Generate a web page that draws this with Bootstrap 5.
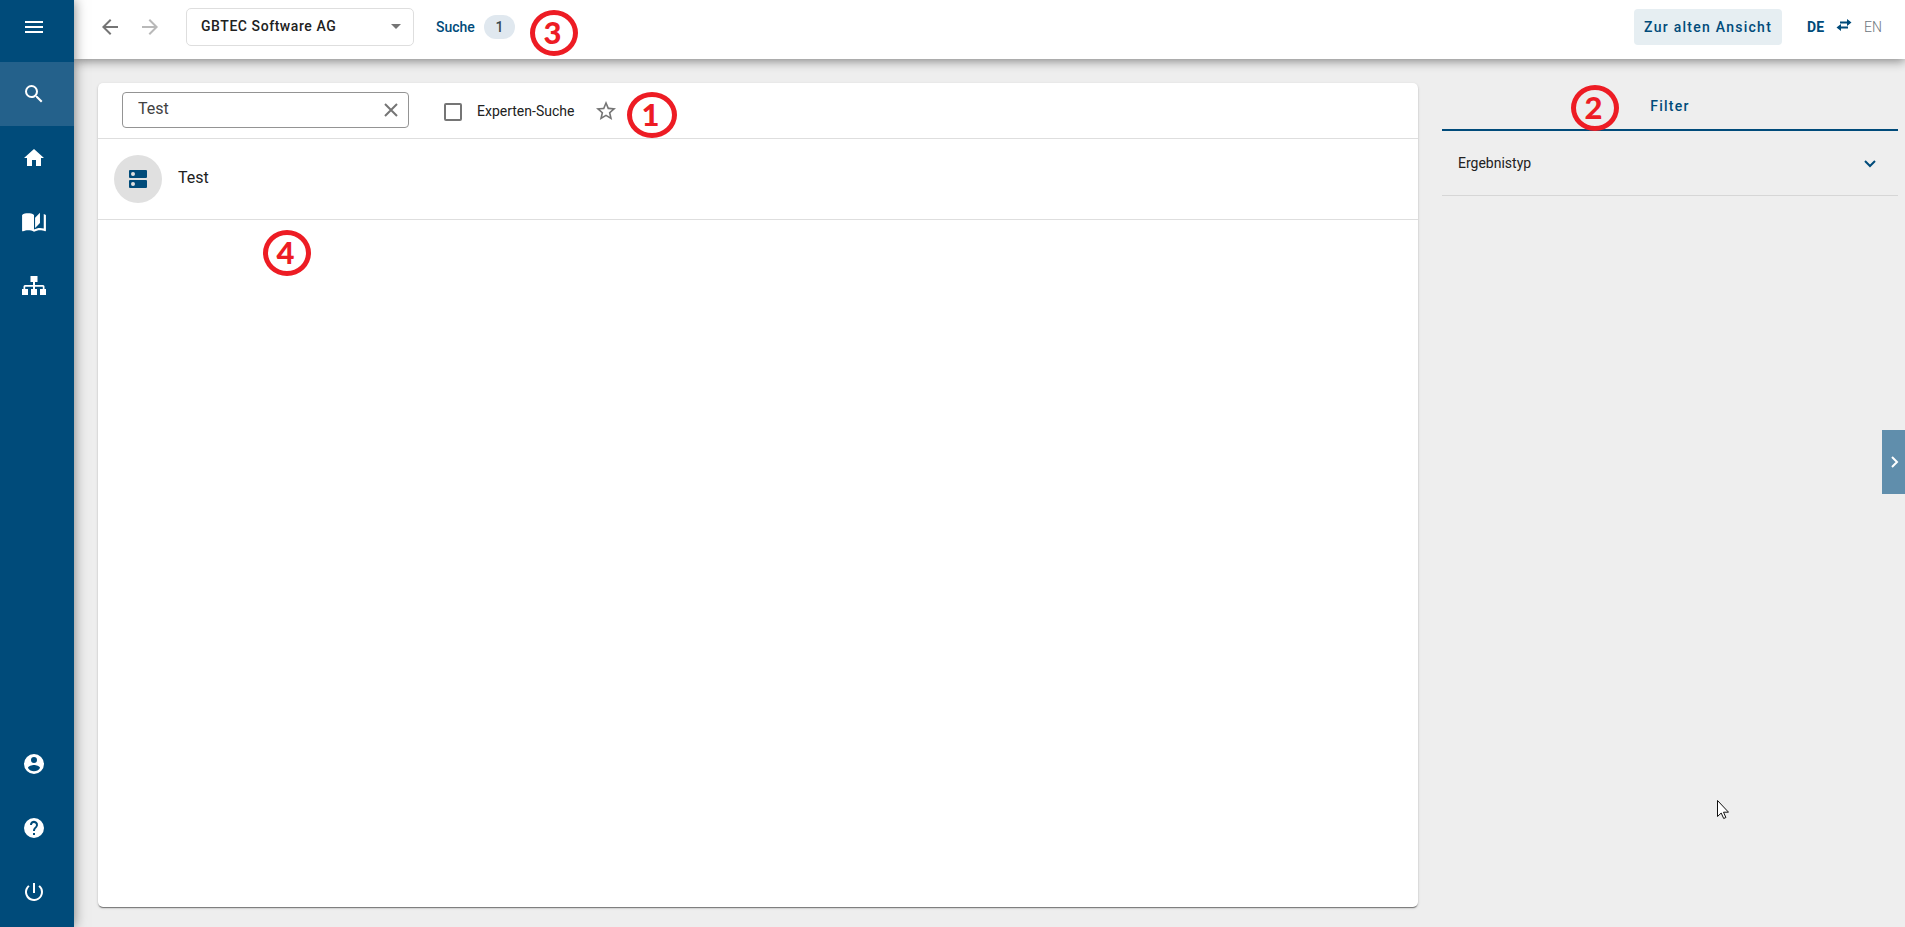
<!DOCTYPE html>
<html lang="de">
<head>
<meta charset="utf-8">
<meta name="viewport" content="width=device-width, initial-scale=1">
<title>Suche</title>
<link href="https://cdn.jsdelivr.net/npm/bootstrap@5.3.0/dist/css/bootstrap.min.css" rel="stylesheet">
<style>
  :root { --brand: #004b7a; --soft: #e6eef2; --line: #dedede; --mark-red: #ed1c24; }
  body { font-family: Roboto, "Liberation Sans", sans-serif; font-size: 14px; line-height: 20px; background: #eee; color: #212121; }
  svg { display: block; fill: currentColor; }
  .stroked { fill: none; stroke: currentColor; stroke-width: 2; }
  .brand-ink { color: var(--brand); }
  .side { width: 74px; background: var(--brand); box-shadow: 0 0 12px rgba(0,0,0,.5); z-index: 2; padding-bottom: 3px; }
  .side a, .side .menu-btn { color: #fff; display: flex; align-items: center; justify-content: center; padding: 0 6px 0 0; }
  .side .menu-btn { height: 62px; padding-bottom: 8px; }
  .side a { height: 64px; }
  .side a.active { background: #24618b; }
  .topbar { height: 59px; background: #fff; box-shadow: 0 2px 10px rgba(0,0,0,.45); padding: 0 23px 6px 24px; z-index: 1; }
  .plain { border: 0; background: none; padding: 0; color: #757575; }
  .tenant { width: 228px; height: 38px; margin-left: 24px; padding: 0 40px 0 14px; font-size: 14px; font-weight: 500; letter-spacing: .04em; border: 1px solid var(--line); border-radius: 5px; color: #212121;
    background-image: url("data:image/svg+xml,%3Csvg xmlns='http://www.w3.org/2000/svg' viewBox='0 0 10 5'%3E%3Cpath fill='%23757575' d='M0 0h10L5 5z'/%3E%3C/svg%3E"); background-size: 10px 5px; background-position: right 12px center; }
  .crumb { margin-left: 22px; gap: 9px; color: var(--brand); font-weight: 500; }
  .count { width: 31px; height: 24px; border-radius: 12px; background: #e0e8ef; color: #37474f; line-height: 24px; }
  .old-view { height: 36px; width: 148px; padding: 0; background: var(--soft); border: 0; border-radius: 4px; color: var(--brand); font-size: 14px; font-weight: 500; letter-spacing: .09em; }
  .lang { margin-left: 25px; gap: 12px; }
  .workspace { gap: 24px; padding: 24px 7px 20px 24px; }
  .results { flex: 1320 1 0; background: #fff; border-radius: 5px; box-shadow: 0 2px 1px -1px rgba(0,0,0,.3), 0 1px 1px rgba(0,0,0,.2), 0 1px 3px rgba(0,0,0,.16); }
  .filters { flex: 456 1 0; }
  .searchbar { height: 56px; padding: 0 24px 2px; border-bottom: 1px solid var(--line); }
  .query { width: 287px; height: 36px; border: 1px solid #949494; border-radius: 4px; padding: 0 8px 0 15px; }
  .query input { border: 0; outline: 0; padding: 0 0 2px; font-size: 16px; color: #424242; min-width: 0; background: none; }
  .expert { margin-left: 35px; gap: 15px; color: #212121; padding-top: 2px; }
  .expert input { appearance: none; width: 18px; height: 18px; border: 2px solid #757575; border-radius: 2px; margin: 2px 0 0; }
  .star { margin-left: 20px; padding-top: 3px; }
  .hit { height: 81px; padding: 0 16px; gap: 16px; border-bottom: 1px solid var(--line); font-size: 16px; color: #212121; }
  .hit-icon { width: 48px; height: 48px; background: #e0e0e0; color: var(--brand); }
  .hit-name { padding-bottom: 2px; }
  .tab-filter { height: 48px; border-bottom: 2px solid var(--brand); color: var(--brand); font-size: 14px; font-weight: 500; letter-spacing: .09em; }
  .facet { height: 65px; padding: 0 20px 0 16px; border-bottom: 1px solid #d6d6d6; color: #212121; font-size: 14px; }
  .drawer { right: 0; top: calc(50% - 34px); width: 23px; height: 64px; background: #608eac; color: #fff; }
  .note { display: flex; align-items: center; justify-content: center; border: 5px solid var(--mark-red); border-radius: 50%; width: 48px; height: 46px; color: var(--mark-red); font: 900 31px Lato, sans-serif; padding: 0 3px 3px 0; }
  .n1 { left: 529px; top: 9px; width: 50px; } .n2 { left: 129px; top: 2px; } .n3 { left: 456px; top: 10px; } .n4 { left: 165px; top: 147px; }
  .pointer { right: 176px; bottom: 107px; }
</style>
</head>
<body>
<div class="d-flex vh-100 overflow-hidden position-relative">
  <nav class="side d-flex flex-column flex-shrink-0 position-relative" aria-label="Hauptmenü">
    <button class="menu-btn border-0 bg-transparent" type="button" aria-label="Menü"><svg width="24" height="24" viewBox="0 0 24 24"><path d="M3 18h18v-2H3v2zm0-5h18v-2H3v2zm0-7v2h18V6H3z"/></svg></button>
    <a class="active" href="#" aria-label="Suche"><svg width="24" height="24" viewBox="0 0 24 24"><path d="M15.500 14h-.79l-.28-.27A6.470 6.470 0 0 0 16 9.500 6.500 6.500 0 1 0 9.500 16c1.610 0 3.090-.59 4.230-1.570l.27.28v.79l5 4.990L20.490 19l-4.990-5zm-6 0C7.010 14 5 11.990 5 9.500S7.010 5 9.500 5 14 7.010 14 9.500 11.990 14 9.500 14z"/></svg></a>
    <a href="#" aria-label="Startseite"><svg width="24" height="24" viewBox="0 0 24 24"><path d="M10 20v-6h4v6h5v-8h3L12 3 2 12h3v8z"/></svg></a>
    <a href="#" aria-label="Katalog"><svg width="26" height="26" viewBox="0 0 24 24"><path d="M17.500 4.500v9.500l-4.500 4.500V9zM6.500 5C4.550 5 2.450 5.400 1 6.500v14.660c0 .25.25.5.5.5.1 0 .15-.07.25-.07C3.100 20.950 5.050 20.500 6.500 20.500c1.950 0 4.050.4 5.500 1.500 1.350-.85 3.800-1.500 5.500-1.500 1.650 0 3.350.3 4.750 1.050.1.050.15.050.25.050.25 0 .5-.25.5-.5V6.500c-.6-.45-1.250-.75-2-1V19c-1.100-.35-2.300-.5-3.500-.5-1.700 0-4.150.65-5.500 1.500V6.500C10.550 5.400 8.450 5 6.500 5z" transform="translate(0 -1)"/></svg></a>
    <a href="#" aria-label="Organisation"><svg width="24" height="20" viewBox="0 0 24 20"><path d="M8.500 0h7v6H13v3h8a1.500 1.500 0 0 1 1.500 1.500V13H24v6h-6v-6h2.800v-2.200H13V13h2v6H9v-6h2v-2.200H3.200V13H6v6H0v-6h1.500v-2.500A1.500 1.500 0 0 1 3 9h8V6H8.500z"/></svg></a>
    <div class="mt-auto">
      <a href="#" aria-label="Profil"><svg width="24" height="24" viewBox="0 0 24 24"><path d="M12 2a10 10 0 1 0 0 20 10 10 0 0 0 0-20zm0 3a3 3 0 1 1 0 6 3 3 0 0 1 0-6zm0 14.200a7.200 7.200 0 0 1-6-3.220c.03-1.990 4-3.080 6-3.080s5.970 1.090 6 3.080a7.200 7.200 0 0 1-6 3.220z"/></svg></a>
      <a href="#" aria-label="Hilfe"><svg width="24" height="24" viewBox="0 0 24 24"><path d="M12 2a10 10 0 1 0 0 20 10 10 0 0 0 0-20zm1 17h-2v-2h2v2zm2.070-7.750-.9.920C13.450 12.900 13 13.500 13 15h-2v-.5c0-1.100.45-2.100 1.170-2.830l1.240-1.260A2 2 0 1 0 10 9H8a4 4 0 1 1 7.070 2.250z"/></svg></a>
      <a href="#" aria-label="Abmelden"><svg width="24" height="24" viewBox="0 0 24 24"><path d="M13 3h-2v10h2V3zm4.830 2.170-1.420 1.420A6.920 6.920 0 0 1 19 12a7 7 0 1 1-11.420-5.420L6.170 5.170A9 9 0 1 0 21 12a8.940 8.940 0 0 0-3.170-6.830z"/></svg></a>
    </div>
  </nav>

  <div class="d-flex flex-column flex-grow-1">
    <header class="topbar d-flex position-relative">
      <div class="d-flex align-items-center flex-grow-1">
        <button class="plain" type="button" aria-label="Zurück"><svg width="24" height="24" viewBox="0 0 24 24"><path d="M20 11H7.830l5.590-5.590L12 4l-8 8 8 8 1.410-1.410L7.830 13H20z"/></svg></button>
        <button class="plain ms-3 opacity-50" type="button" aria-label="Vorwärts"><svg width="24" height="24" viewBox="0 0 24 24"><path d="M12 4l-1.410 1.410L16.170 11H4v2h12.170l-5.580 5.590L12 20l8-8z"/></svg></button>
        <select class="form-select tenant" aria-label="Mandant"><option>GBTEC Software AG</option></select>
        <a class="crumb d-flex align-items-center text-decoration-none" href="#">Suche <span class="count text-center">1</span></a>
      </div>
      <div class="d-flex align-items-center">
        <button class="old-view" type="button">Zur alten Ansicht</button>
        <div class="lang d-flex align-items-center">
          <a class="brand-ink text-decoration-none fw-bold" href="#">DE</a>
          <svg class="brand-ink mb-1" width="16" height="12" viewBox="0 0 16 12"><path d="M11 0l4.500 3.500L11 7V4.500H4v-2h7zM5 5v2.500h7v2H5V12L.5 8.500z"/></svg>
          <a class="text-decoration-none text-secondary fw-light" href="#">EN</a>
        </div>
      </div>
      <span class="note n3 position-absolute">3</span>
    </header>

    <main class="workspace d-flex flex-grow-1">
      <section class="results position-relative">
        <form class="searchbar d-flex align-items-center">
          <div class="query d-flex align-items-center">
            <input class="flex-grow-1" type="text" value="Test" aria-label="Suchbegriff">
            <button class="plain" type="button" aria-label="Leeren"><svg class="stroked" width="18" height="18" viewBox="0 0 18 18"><path d="M3 3l12 12M15 3L3 15"/></svg></button>
          </div>
          <label class="expert d-flex align-items-center"><input type="checkbox">Experten-Suche</label>
          <button class="plain star" type="button" aria-label="Favorit"><svg width="24" height="24" viewBox="0 0 24 24"><path fill-rule="evenodd" d="M22 9.240l-7.190-.62L12 2 9.190 8.630 2 9.240l5.460 4.730L5.820 21 12 17.270 18.180 21l-1.630-7.030L22 9.240zM12 15.400l-3.760 2.270 1-4.280-3.320-2.880 4.380-.38L12 6.100l1.710 4.040 4.380.38-3.320 2.880 1 4.280L12 15.400z"/></svg></button>
        </form>
        <a class="hit d-flex align-items-center text-decoration-none" href="#">
          <span class="hit-icon rounded-circle d-flex align-items-center justify-content-center"><svg width="18" height="18" viewBox="0 0 18 18"><path fill-rule="evenodd" d="M1 0h16q1 0 1 1v6q0 1-1 1H1Q0 8 0 7V1q0-1 1-1zm3 2a2 2 0 1 0 0 4 2 2 0 0 0 0-4zM1 10h16q1 0 1 1v6q0 1-1 1H1q-1 0-1-1v-6q0-1 1-1zm3 2a2 2 0 1 0 0 4 2 2 0 0 0 0-4z"/></svg></span>
          <span class="hit-name">Test</span>
        </a>
        <span class="note n1 position-absolute">1</span>
        <span class="note n4 position-absolute">4</span>
      </section>
      <aside class="filters position-relative">
        <button class="tab-filter w-100 border-top-0 border-start-0 border-end-0 bg-transparent" type="button">Filter</button>
        <button class="facet w-100 d-flex align-items-center justify-content-between border-top-0 border-start-0 border-end-0 bg-transparent" type="button">Ergebnistyp
          <svg class="stroked brand-ink" width="16" height="16" viewBox="0 0 16 16"><path d="M3 6l5 5 5-5"/></svg></button>
        <span class="note n2 position-absolute">2</span>
      </aside>
    </main>
  </div>

  <button class="drawer position-absolute border-0 p-0 d-flex align-items-center justify-content-center" type="button" aria-label="Seitenleiste"><svg class="stroked" width="12" height="14" viewBox="0 0 12 14"><path d="M4 2l5 5-5 5"/></svg></button>
  <svg class="pointer position-absolute" width="12" height="20" viewBox="0 0 12 20"><path d="M.5.5v16l3.700-3.500 2.500 5.500 2.200-1-2.400-5.300h5z" fill="#fff" stroke="#111" style="fill:#fff"/></svg>
</div>
<script src="https://cdn.jsdelivr.net/npm/bootstrap@5.3.0/dist/js/bootstrap.bundle.min.js"></script>
</body>
</html>
